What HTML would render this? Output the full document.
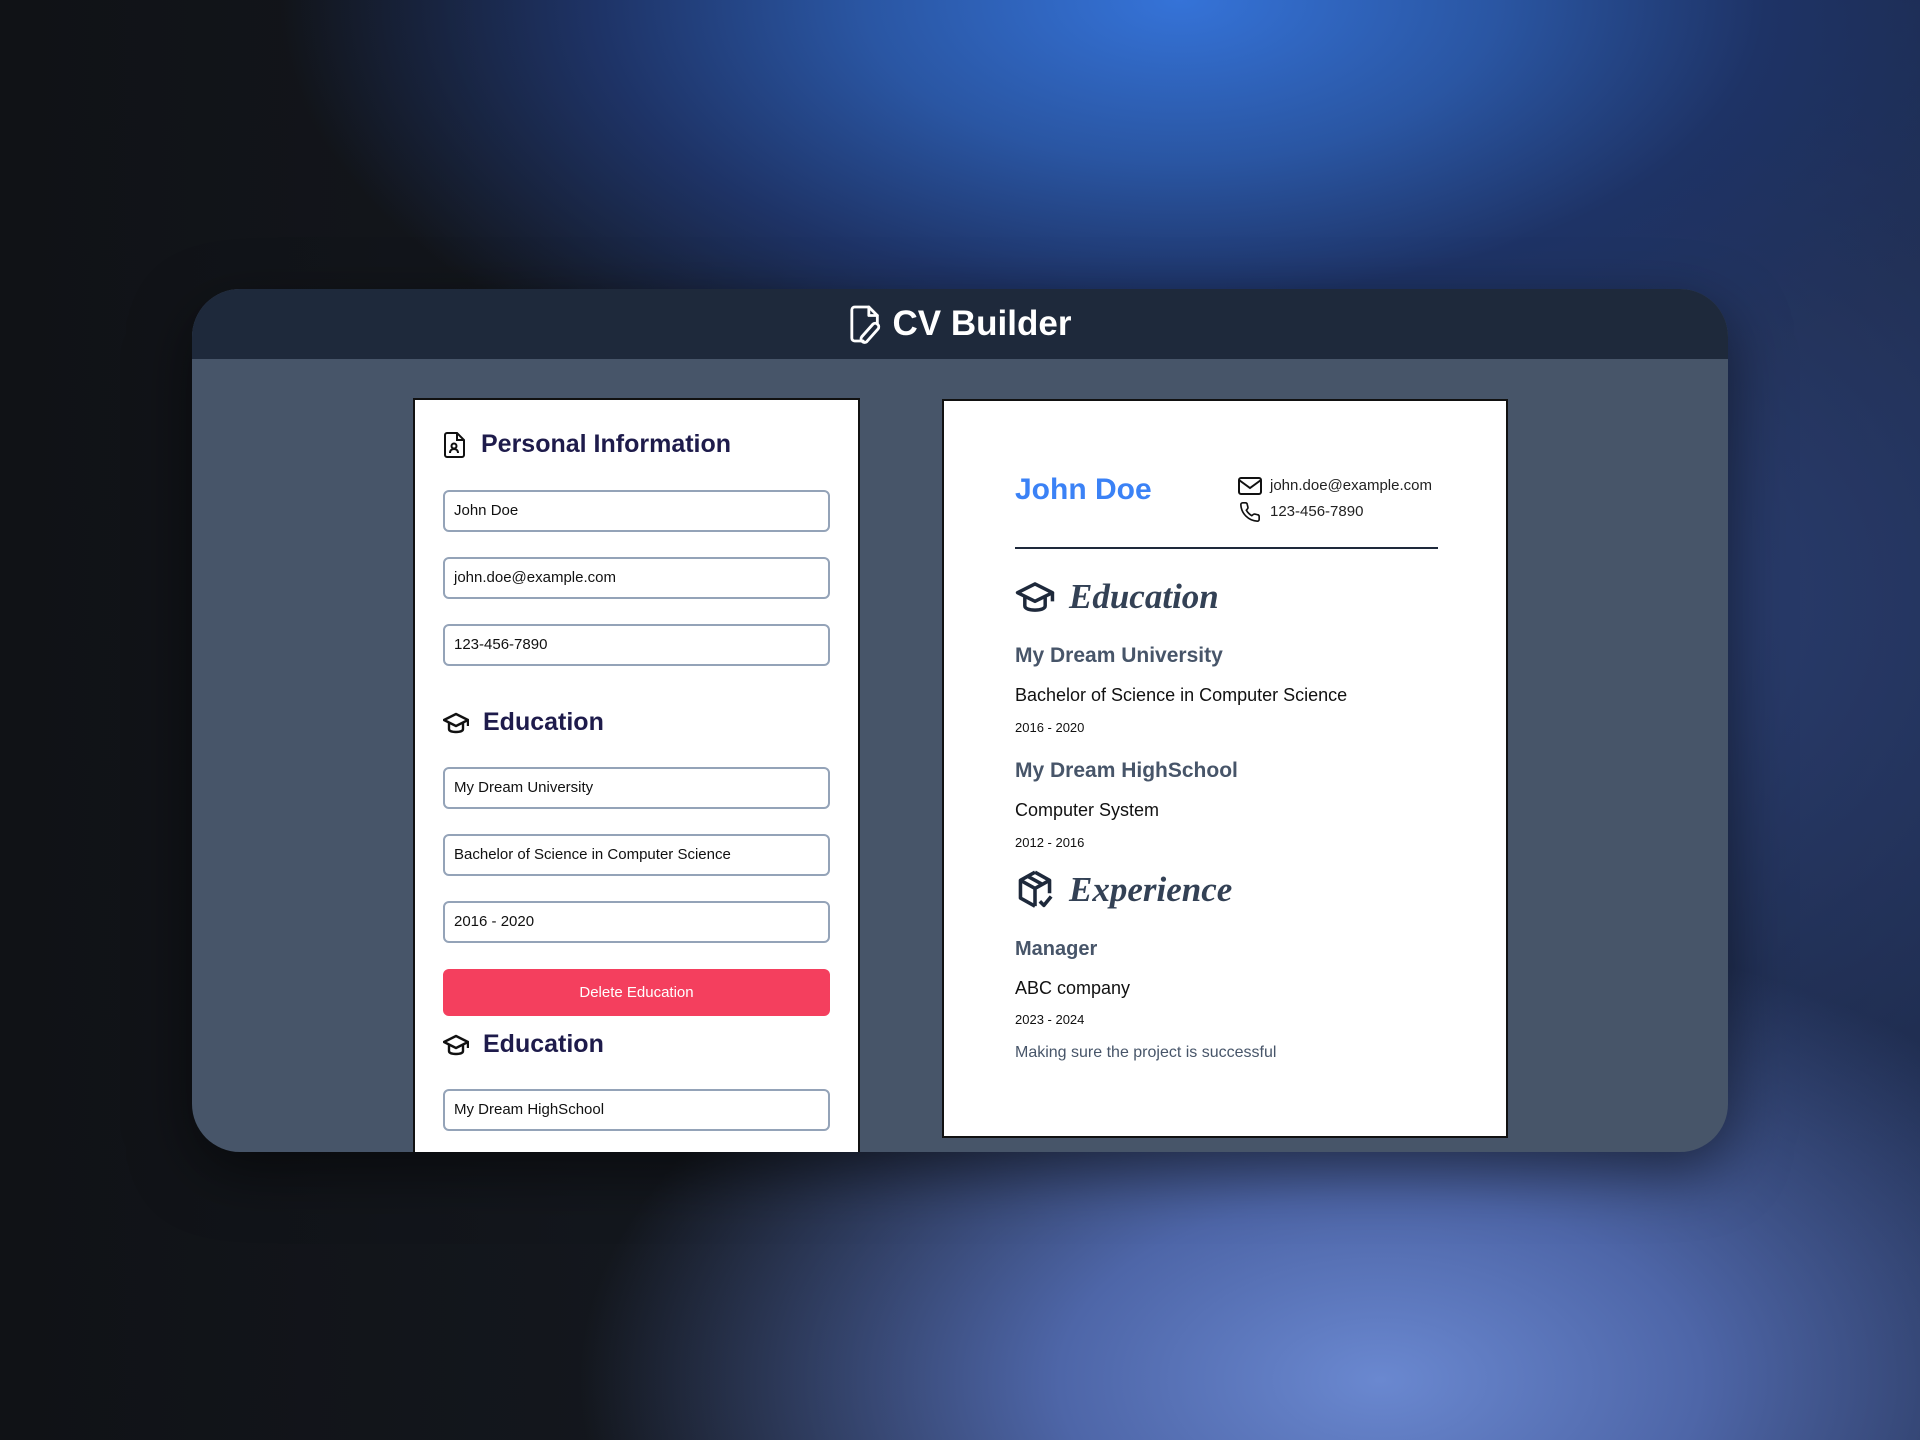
<!DOCTYPE html>
<html><head><meta charset="utf-8"><style>
*{margin:0;padding:0;box-sizing:border-box}
body{width:1920px;height:1440px;overflow:hidden;font-family:"Liberation Sans",sans-serif;
background:radial-gradient(ellipse 900px 460px at 1180px 0px,#3573d8 0%,#2a56a3 35%,#1e3366 65%,rgba(25,40,80,0) 100%),
radial-gradient(ellipse 800px 460px at 1380px 1380px,#6a88d0 0%,#4e66a8 40%,rgba(40,55,100,0) 100%),
radial-gradient(ellipse 900px 800px at 1600px 600px,#2b3f73 0%,rgba(20,30,60,0) 100%),
linear-gradient(90deg,#101216 0%,#14181f 40%,#1a2540 100%);position:relative}
.card{position:absolute;left:192px;top:289px;width:1536px;height:863px;border-radius:48px;background:#475569;overflow:hidden;box-shadow:0 20px 60px rgba(0,0,0,.5)}
.hdr{position:absolute;left:0;top:0;width:100%;height:70px;background:#1e293b;color:#fff;font-weight:bold;font-size:35px;display:flex;align-items:center;justify-content:center;gap:10px}
.a{position:absolute}
.left{left:221px;top:109px;width:447px;height:800px;background:#fff;border:2px solid #111}
.right{left:750px;top:110px;width:566px;height:739px;background:#fff;border:2px solid #111}
.h{position:absolute;left:28px;font-size:25px;font-weight:bold;color:#1e1b4b;display:flex;align-items:center;gap:14px}
.in{position:absolute;left:28px;width:387px;height:42px;border:2px solid #94a3b8;border-radius:6px;font-size:15px;color:#111;padding-left:9px;line-height:38px}
.btn{position:absolute;left:28px;width:387px;height:47px;background:#f43f5e;border-radius:6px;color:#fff;font-size:15px;text-align:center;line-height:47px}
.r{position:absolute;left:71px}
.t1{font-size:21px;font-weight:bold;color:#475569}
.t2{font-size:18px;color:#111}
.t3{font-size:13px;color:#111}
.sc{font-family:"Liberation Serif",serif;font-style:italic;font-weight:bold;font-size:35px;color:#334155;display:flex;align-items:center;gap:14px}
</style></head><body>
<div class="card">
 <div class="hdr"><svg width="34" height="40" viewBox="0 0 24 28" fill="none" stroke="#fff" stroke-width="2" stroke-linejoin="round" stroke-linecap="round"><path d="M10 26H4a2 2 0 0 1-2-2V4a2 2 0 0 1 2-2h10l6 6v6"/><path d="M14 2v6h6"/><path d="M17 14l-8 9a2.5 2.5 0 0 0 3.5 3.5l8-9a2.5 2.5 0 0 0-3.5-3.5z"/></svg>CV Builder</div>
 <div class="a left">
  <div class="h" style="top:30px"><svg width="24" height="28" viewBox="0 0 24 28" fill="none" stroke="#111" stroke-width="2"><path d="M4 2h10l7 7v15a2 2 0 0 1-2 2H4a2 2 0 0 1-2-2V4a2 2 0 0 1 2-2z"/><path d="M14 2v7h7"/><circle cx="11" cy="15" r="2.5"/><path d="M7 22c0-3 2-4 4-4s4 1 4 4"/></svg>Personal Information</div>
  <div class="in" style="top:90px">John Doe</div>
  <div class="in" style="top:157px">john.doe@example.com</div>
  <div class="in" style="top:224px">123-456-7890</div>
  <div class="h" style="top:308px"><svg width="26" height="22" viewBox="0 0 26 22" fill="none" stroke="#111" stroke-width="2.4" stroke-linejoin="round"><path d="M13 2L1 8l12 6 12-6z"/><path d="M6 11v6c0 2 3 3 7 3s7-1 7-3v-6"/><path d="M25 8v6"/></svg>Education</div>
  <div class="in" style="top:367px">My Dream University</div>
  <div class="in" style="top:434px">Bachelor of Science in Computer Science</div>
  <div class="in" style="top:501px">2016 - 2020</div>
  <div class="btn" style="top:569px">Delete Education</div>
  <div class="h" style="top:630px"><svg width="26" height="22" viewBox="0 0 26 22" fill="none" stroke="#111" stroke-width="2.4" stroke-linejoin="round"><path d="M13 2L1 8l12 6 12-6z"/><path d="M6 11v6c0 2 3 3 7 3s7-1 7-3v-6"/><path d="M25 8v6"/></svg>Education</div>
  <div class="in" style="top:689px">My Dream HighSchool</div>
 </div>
 <div class="a right">
  <div class="r" style="top:72px;font-size:30px;font-weight:bold;color:#3b82f6">John Doe</div>
  <div class="a" style="left:294px;top:72px;font-size:15px;color:#222;line-height:26px">
   <div style="display:flex;align-items:center;gap:8px"><svg width="24" height="20" viewBox="0 0 24 20" fill="none" stroke="#111" stroke-width="2"><rect x="1" y="2" width="22" height="16" rx="2"/><path d="M1 4l11 8 11-8"/></svg>john.doe@example.com</div>
   <div style="display:flex;align-items:center;gap:8px"><svg width="24" height="22" viewBox="0 0 24 24" fill="none" stroke="#111" stroke-width="1.8"><path d="M22 17v3a2 2 0 0 1-2 2A19 19 0 0 1 2 4a2 2 0 0 1 2-2h3a2 2 0 0 1 2 1.7l.7 3a2 2 0 0 1-.5 1.9L8 10a16 16 0 0 0 6 6l1.4-1.2a2 2 0 0 1 1.9-.5l3 .7A2 2 0 0 1 22 17z"/></svg>123-456-7890</div>
  </div>
  <div class="a" style="left:71px;top:146px;width:423px;height:2px;background:#1e293b"></div>
  <div class="r sc" style="top:176px"><svg width="40" height="32" viewBox="0 0 26 22" fill="none" stroke="#1e293b" stroke-width="2.4" stroke-linejoin="round"><path d="M13 2L1 8l12 6 12-6z"/><path d="M6 11v6c0 2 3 3 7 3s7-1 7-3v-6"/><path d="M25 8v6"/></svg>Education</div>
  <div class="r t1" style="top:243px">My Dream University</div>
  <div class="r t2" style="top:284px">Bachelor of Science in Computer Science</div>
  <div class="r t3" style="top:319px">2016 - 2020</div>
  <div class="r t1" style="top:358px">My Dream HighSchool</div>
  <div class="r t2" style="top:399px">Computer System</div>
  <div class="r t3" style="top:434px">2012 - 2016</div>
  <div class="r sc" style="top:468px"><svg width="40" height="42" viewBox="0 0 24 26" fill="none" stroke="#1e293b" stroke-width="2.2" stroke-linejoin="round"><path d="M12 2l9 5v8M12 2L3 7v11l9 5"/><path d="M3 7l9 5 9-5M12 12v11M7.5 4.5l9 5"/><path d="M15 20l2.5 2.5L22 17"/></svg>Experience</div>
  <div class="r t1" style="top:537px;font-size:20px">Manager</div>
  <div class="r t2" style="top:577px">ABC company</div>
  <div class="r t3" style="top:611px">2023 - 2024</div>
  <div class="r" style="top:643px;font-size:16px;color:#475569">Making sure the project is successful</div>
 </div>
</div>
</body></html>
